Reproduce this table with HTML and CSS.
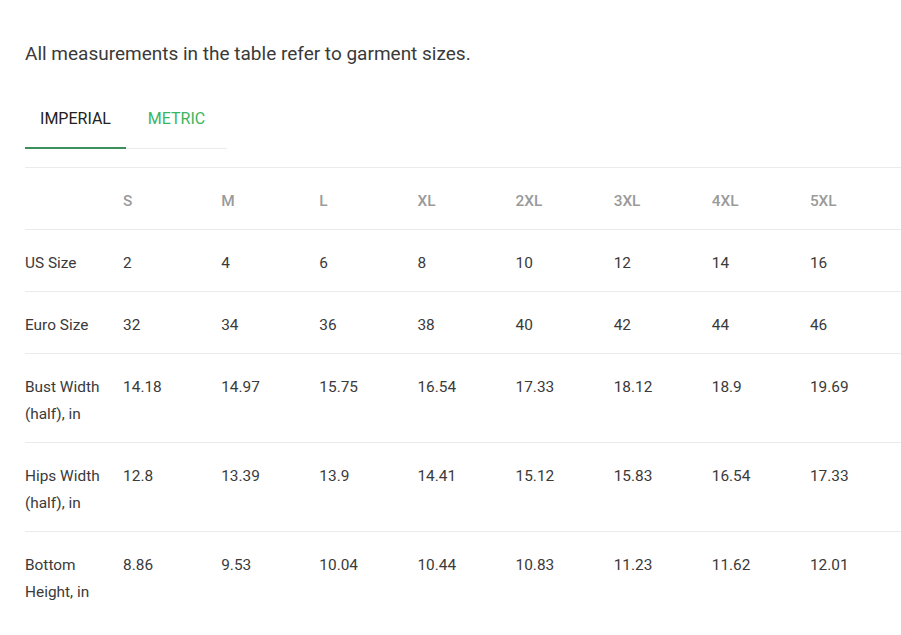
FILE: index.html
```html
<!DOCTYPE html>
<html lang="en">
<head>
<meta charset="utf-8">
<link rel="stylesheet" href="styles.css">
</head>
<body>
<div class="page">
  <p class="intro">All measurements in the table refer to garment sizes.</p>
  <div class="tabs">
    <div class="tab active">IMPERIAL</div>
    <div class="tab">METRIC</div>
  </div>
  <table class="sizes">
    <thead>
      <tr><th></th><th>S</th><th>M</th><th>L</th><th>XL</th><th>2XL</th><th>3XL</th><th>4XL</th><th>5XL</th></tr>
    </thead>
    <tbody>
      <tr><td>US Size</td><td>2</td><td>4</td><td>6</td><td>8</td><td>10</td><td>12</td><td>14</td><td>16</td></tr>
      <tr><td>Euro Size</td><td>32</td><td>34</td><td>36</td><td>38</td><td>40</td><td>42</td><td>44</td><td>46</td></tr>
      <tr><td>Bust Width (half), in</td><td>14.18</td><td>14.97</td><td>15.75</td><td>16.54</td><td>17.33</td><td>18.12</td><td>18.9</td><td>19.69</td></tr>
      <tr><td>Hips Width (half), in</td><td>12.8</td><td>13.39</td><td>13.9</td><td>14.41</td><td>15.12</td><td>15.83</td><td>16.54</td><td>17.33</td></tr>
      <tr><td>Bottom Height, in</td><td>8.86</td><td>9.53</td><td>10.04</td><td>10.44</td><td>10.83</td><td>11.23</td><td>11.62</td><td>12.01</td></tr>
    </tbody>
  </table>
</div>
</body>
</html>
```

FILE: styles.css
```css
html, body {
  margin: 0;
  padding: 0;
  background: #fff;
  overflow: hidden;
}
body {
  font-family: Roboto, "Liberation Sans", Arial, sans-serif;
  color: #333;
}
.page {
  padding: 0 0 0 25px;
  width: 920px;
}
.intro {
  margin: 0;
  padding-top: 40px;
  font-size: 19px;
  line-height: 27px;
  color: #3a3a3a;
}
.tabs {
  display: flex;
  width: 202px;
  margin-top: 33px;
  border-bottom: 1px solid #ebebeb;
}
.tab {
  width: 101px;
  text-align: center;
  font-size: 16px;
  line-height: 20px;
  padding: 9px 0 18px;
  color: #3bb55e;
  margin-bottom: -1px;
  border-bottom: 2px solid transparent;
}
.tab.active {
  color: #222;
  border-bottom-color: #3a8f5a;
}
.sizes {
  margin-top: 18px;
  border-collapse: collapse;
  table-layout: fixed;
  width: 883px;
}
.sizes th, .sizes td {
  text-align: left;
  vertical-align: top;
  padding: 20px 4px 14px 0;
  font-size: 15.4px;
  line-height: 27px;
  border-top: 1px solid #ebebeb;
}
.sizes th {
  font-weight: 500;
  color: #9a9a9a;
}
.sizes td {
  color: #3a3a3a;
}
```
